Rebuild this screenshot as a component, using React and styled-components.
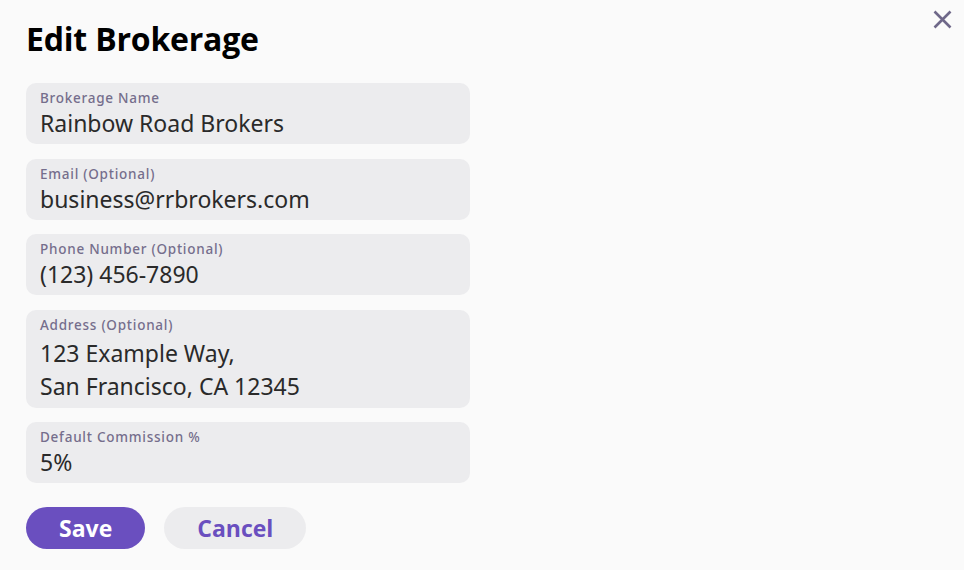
import React, { useState } from "react";
import styled, { createGlobalStyle } from "styled-components";

const GlobalStyle = createGlobalStyle`
  html, body {
    margin: 0;
    padding: 0;
    background: #fafafa;
  }
  body {
    font-family: "Noto Sans", "Open Sans", sans-serif;
    color: #222;
  }
`;

const Modal = styled.div`
  position: relative;
  width: 964px;
  height: 570px;
  box-sizing: border-box;
  padding: 20px 26px 0;
  background: #fafafa;
`;

const CloseBtn = styled.button`
  position: absolute;
  top: 9px;
  right: 11px;
  width: 21px;
  height: 21px;
  padding: 0;
  border: 0;
  background: transparent;
  cursor: pointer;
  display: flex;
  align-items: center;
  justify-content: center;
`;

const Title = styled.h1`
  margin: 0 0 25px;
  font-family: "Open Sans", "Noto Sans", sans-serif;
  font-size: 32px;
  line-height: 38px;
  font-weight: 700;
  color: #000;
  letter-spacing: -0.2px;
`;

const Form = styled.form`
  display: flex;
  flex-direction: column;
  gap: 14.5px;
  width: 444px;
`;

const Field = styled.label`
  display: flex;
  flex-direction: column;
  box-sizing: border-box;
  padding: ${(p) => (p.$multiline ? "6px 14px 5px" : "6px 14px 4px")};
  background: #ececee;
  border-radius: 10px;
  cursor: text;
`;

const Label = styled.span`
  font-size: 13.5px;
  line-height: 18px;
  font-weight: 500;
  letter-spacing: 0.75px;
  color: #756e8c;
`;

const Input = styled.input`
  border: 0;
  outline: none;
  padding: 0;
  margin: 0;
  background: transparent;
  font-family: inherit;
  font-size: 23px;
  line-height: 33px;
  height: 33px;
  color: #2a2a2a;
`;

const TextArea = styled.textarea`
  box-sizing: border-box;
  border: 0;
  outline: none;
  padding: 3px 0 0;
  margin: 0;
  background: transparent;
  font-family: inherit;
  font-size: 23px;
  line-height: 33px;
  height: 69px;
  color: #2a2a2a;
  resize: none;
  overflow: hidden;
`;

const Actions = styled.div`
  display: flex;
  gap: 19px;
  margin-top: 9.5px;
`;

const Button = styled.button`
  height: 42px;
  padding: 0 33px;
  border: 0;
  border-radius: 21px;
  font-family: "Open Sans", "Noto Sans", sans-serif;
  font-size: 23px;
  font-weight: 700;
  cursor: pointer;
  background: ${(p) => (p.$primary ? "#6a4fbf" : "#ececee")};
  color: ${(p) => (p.$primary ? "#fff" : "#6a4fbf")};
`;

const App = () => {
  const [name, setName] = useState("Rainbow Road Brokers");
  const [email, setEmail] = useState("business@rrbrokers.com");
  const [phone, setPhone] = useState("(123) 456-7890");
  const [address, setAddress] = useState(
    "123 Example Way,\nSan Francisco, CA 12345"
  );
  const [commission, setCommission] = useState("5%");

  const onSubmit = (e) => {
    e.preventDefault();
  };

  return (
    <>
      <GlobalStyle />
      <Modal>
        <CloseBtn type="button" aria-label="Close">
          <svg width="21" height="21" viewBox="0 0 21 21">
            <path
              d="M2.5 2.5 L18.5 18.5 M18.5 2.5 L2.5 18.5"
              stroke="#6f6889"
              strokeWidth="2.6"
              strokeLinecap="butt"
            />
          </svg>
        </CloseBtn>
        <Title>Edit Brokerage</Title>
        <Form onSubmit={onSubmit}>
          <Field>
            <Label>Brokerage Name</Label>
            <Input value={name} onChange={(e) => setName(e.target.value)} />
          </Field>
          <Field>
            <Label>Email (Optional)</Label>
            <Input value={email} onChange={(e) => setEmail(e.target.value)} />
          </Field>
          <Field>
            <Label>Phone Number (Optional)</Label>
            <Input value={phone} onChange={(e) => setPhone(e.target.value)} />
          </Field>
          <Field $multiline>
            <Label>Address (Optional)</Label>
            <TextArea
              rows={2}
              value={address}
              onChange={(e) => setAddress(e.target.value)}
            />
          </Field>
          <Field>
            <Label>Default Commission %</Label>
            <Input
              value={commission}
              onChange={(e) => setCommission(e.target.value)}
            />
          </Field>
          <Actions>
            <Button type="submit" $primary>
              Save
            </Button>
            <Button type="button">Cancel</Button>
          </Actions>
        </Form>
      </Modal>
    </>
  );
};

export default App;
